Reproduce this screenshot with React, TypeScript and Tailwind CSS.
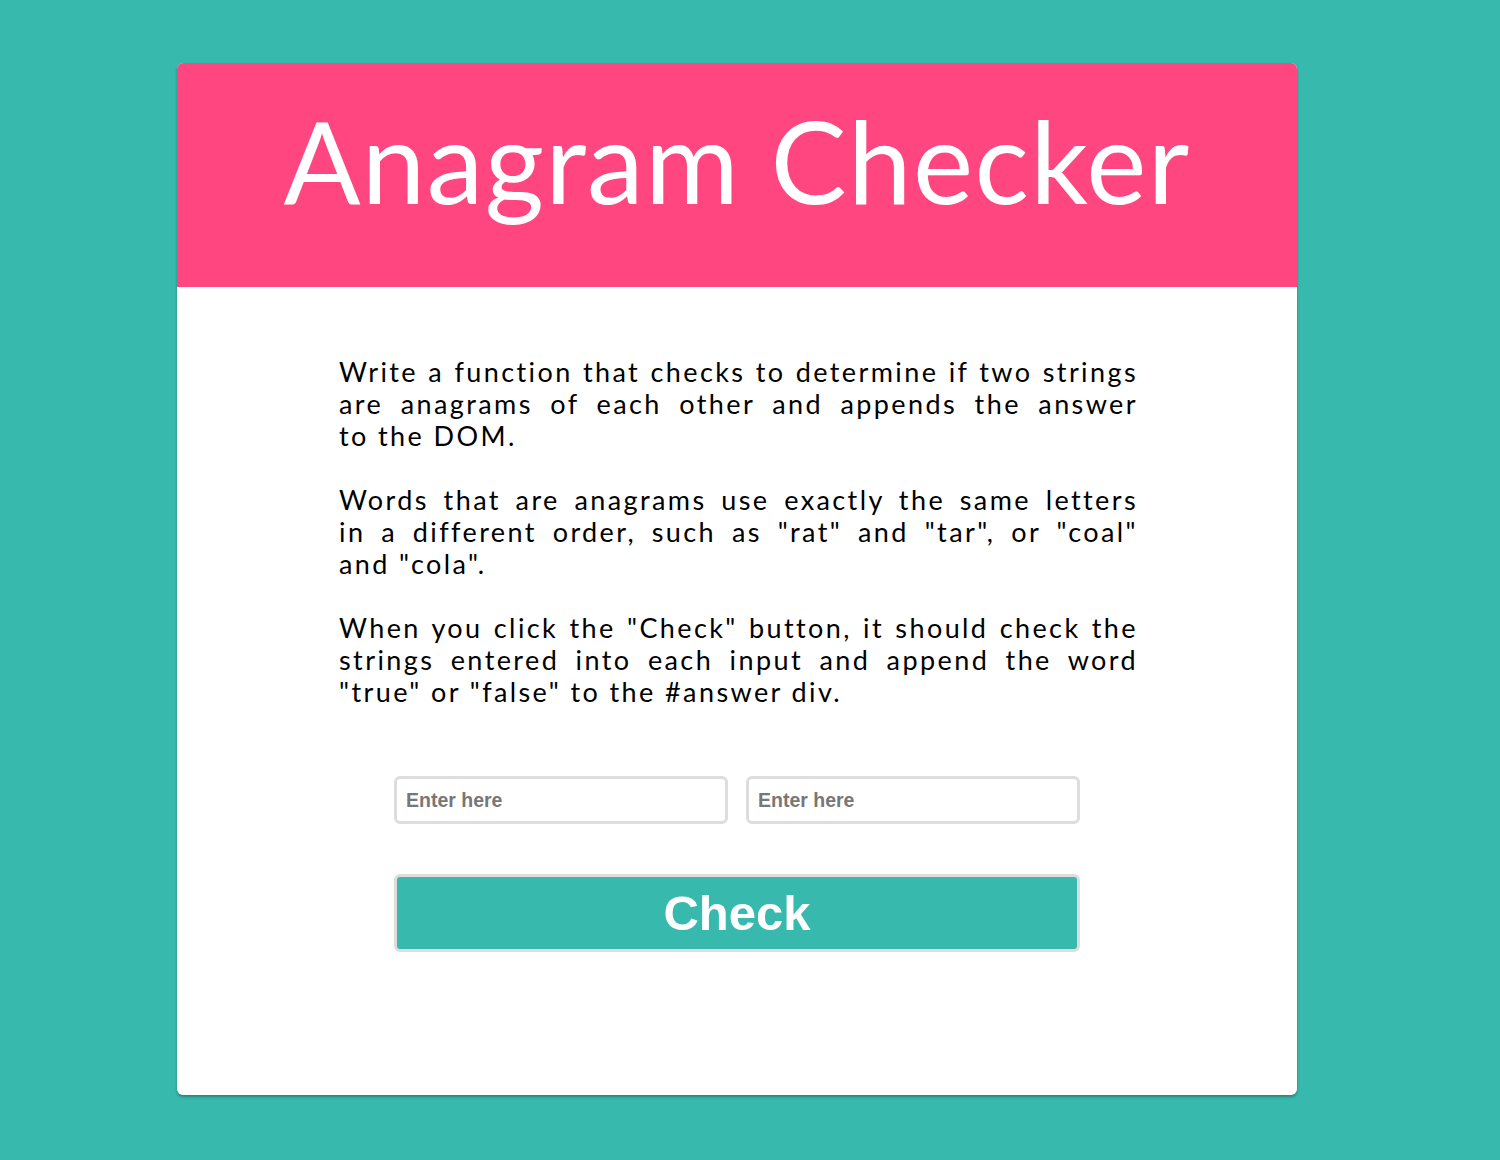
import { useState } from "react";

const paragraphs: string[][] = [
    [
        "Write a function that checks to determine if two strings",
        "are anagrams of each other and appends the answer",
        "to the DOM.",
    ],
    [
        "Words that are anagrams use exactly the same letters",
        "in a different order, such as \"rat\" and \"tar\", or \"coal\"",
        "and \"cola\".",
    ],
    [
        "When you click the \"Check\" button, it should check the",
        "strings entered into each input and append the word",
        "\"true\" or \"false\" to the #answer div.",
    ],
];

function isAnagram(a: string, b: string) {
    const clean = (s: string) => s.toLowerCase().replace(/[^a-z0-9]/g, "").split("").sort().join("");
    return clean(a) === clean(b);
}

export default function App() {
    const [first, setFirst] = useState("");
    const [second, setSecond] = useState("");
    const [answer, setAnswer] = useState("");

    return (
        <main className="min-h-screen bg-[#37baad] pt-[63px] pl-[177px] pb-[65px]">
            <div className="w-[1120px] rounded-[6px] bg-white shadow-[0_2px_3px_rgba(0,0,0,0.3)] overflow-hidden">
                <header className="h-[224px] bg-[#ff4681] flex justify-center pt-[40px]">
                    <h1 className="text-white text-[114px] leading-[114px] font-['Lato',sans-serif] font-normal tracking-[1.3px]">
                        Anagram Checker
                    </h1>
                </header>

                <section className="h-[808px] pt-[69px]">
                    <div className="w-[799px] ml-[162px] font-['Lato',sans-serif] text-[27px] leading-[32px] tracking-[2.4px] text-black flex flex-col gap-[32px]">
                        {paragraphs.map((lines, i) => (
                            <p key={i}>
                                {lines.map((line, j) => (
                                    <span
                                        key={j}
                                        className={j < lines.length - 1 ? "block whitespace-nowrap text-justify [text-align-last:justify]" : "block whitespace-nowrap"}
                                    >
                                        {line}
                                    </span>
                                ))}
                            </p>
                        ))}
                    </div>

                    <div className="w-[686px] mx-auto mt-[68px]">
                        <div id="answer" className="flex gap-[18px]">
                            <input
                                type="text"
                                placeholder="Enter here"
                                value={first}
                                onChange={(e) => setFirst(e.target.value)}
                                className="w-[334px] h-[48px] rounded-[6px] border-[3px] border-[#dddddd] px-[9px] font-['Liberation_Sans',sans-serif] font-bold text-[19.5px] text-[#555] placeholder:text-[#777] outline-none"
                            />
                            <input
                                type="text"
                                placeholder="Enter here"
                                value={second}
                                onChange={(e) => setSecond(e.target.value)}
                                className="w-[334px] h-[48px] rounded-[6px] border-[3px] border-[#dddddd] px-[9px] font-['Liberation_Sans',sans-serif] font-bold text-[19.5px] text-[#555] placeholder:text-[#777] outline-none"
                            />
                        </div>
                        <button
                            type="button"
                            onClick={() => setAnswer(String(isAnagram(first, second)))}
                            className="mt-[50px] block w-[686px] h-[78px] rounded-[6px] border-[3px] border-[#dddddd] bg-[#37baad] text-white font-['Liberation_Sans',sans-serif] font-bold text-[49px] leading-none"
                        >
                            Check
                        </button>
                        {answer && <div className="mt-4 text-center font-['Lato',sans-serif] text-2xl">{answer}</div>}
                    </div>
                </section>
            </div>
        </main>
    );
}
